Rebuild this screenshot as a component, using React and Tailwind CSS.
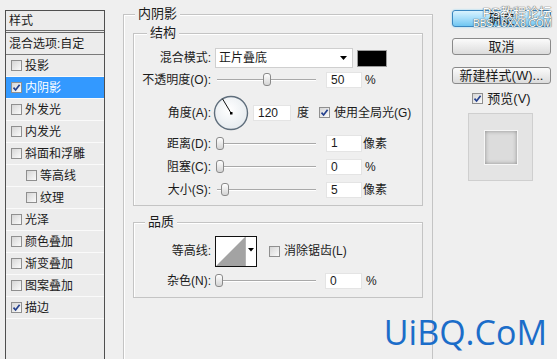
import React from 'react';

const styleItems = [
  { label: '投影', checked: false },
  { label: '内阴影', checked: true, selected: true },
  { label: '外发光', checked: false },
  { label: '内发光', checked: false },
  { label: '斜面和浮雕', checked: false },
  { label: '等高线', checked: false, indent: true },
  { label: '纹理', checked: false, indent: true },
  { label: '光泽', checked: false },
  { label: '颜色叠加', checked: false },
  { label: '渐变叠加', checked: false },
  { label: '图案叠加', checked: false },
  { label: '描边', checked: true },
];

function Check({ checked }) {
  return (
    <span className="inline-flex h-[11px] w-[11px] shrink-0 items-center justify-center border border-[#8f8f8f] bg-linear-to-br from-[#d6d6d6] to-[#fbfbfb]">
      {checked && (
        <svg width="9" height="9" viewBox="0 0 9 9">
          <path d="M1.5 4.6 L3.6 7 L7.6 1.8" fill="none" stroke="#24408e" strokeWidth="1.7" />
        </svg>
      )}
    </span>
  );
}

function Legend({ children, className }) {
  return (
    <span className={`absolute top-[-9px] bg-[#efefef] px-[3px] text-[13px] leading-[16px] ${className}`}>
      {children}
    </span>
  );
}

function Row({ label, className, children }) {
  return (
    <div className={`flex items-center ${className}`}>
      <span className="w-[77px] shrink-0 text-right text-[12px] leading-[16px]">{label}</span>
      <div className="ml-[4px] flex items-center">{children}</div>
    </div>
  );
}

function Slider({ pos }) {
  return (
    <div className="relative h-[16px] w-[103px]">
      <div className="absolute left-[2px] right-[2px] top-[7px] h-[2px] border-t border-b border-t-[#a9a9a9] border-b-white" />
      <div
        className="absolute top-[1px] h-[13px] w-[8px] rounded-[3px] border border-[#8a8a8a] bg-linear-to-b from-white to-[#d4d4d4]"
        style={{ left: pos }}
      />
    </div>
  );
}

function Field({ value, className = 'ml-[8px]' }) {
  return (
    <div className={`h-[16px] w-[36px] border border-[#e4e4e4] bg-white pl-[4px] text-[12px] leading-[15px] ${className}`}>
      {value}
    </div>
  );
}

function Button({ children, primary, className = '' }) {
  return (
    <div
      className={`flex h-[17px] w-[99px] items-center justify-center rounded-[3px] border text-[13px] leading-[16px] ${
        primary
          ? 'border-[#3a86bf] bg-linear-to-b from-[#d9f3fe] via-[#a6defa] to-[#6fc6f1] shadow-[0_0_2px_#7fd0f5]'
          : 'border-[#8a8a8a] bg-linear-to-b from-[#fbfbfb] to-[#dcdcdc]'
      } ${className}`}
    >
      {children}
    </div>
  );
}

export default function App() {
  return (
    <div className="relative flex h-[359px] w-[557px] items-start overflow-hidden bg-[#efefef] text-[#1b1b1b] [font-family:'Liberation_Sans','Noto_Sans_CJK_SC',sans-serif]">
      {/* style list */}
      <div className="ml-[5px] mt-[10px] h-[360px] w-[100px] shrink-0 border border-[#4f4f4f] bg-[#ececec] text-[12px] leading-[16px]">
        <div className="flex h-[22px] items-center border-b-[3px] border-double border-[#6a6a6a] pl-[3px]">样式</div>
        <div className="flex h-[22px] items-center border-b border-[#7a7a7a] pl-[3px]">混合选项:自定</div>
        {styleItems.map((item) => (
          <div
            key={item.label}
            className={`flex h-[22px] items-center gap-[3px] border-b border-[#fafafa] ${item.indent ? 'pl-[20px]' : 'pl-[5px]'} ${item.selected ? 'bg-[#3399ff] text-white' : ''}`}
          >
            <Check checked={item.checked} />
            <span>{item.label}</span>
          </div>
        ))}
      </div>

      {/* inner shadow settings */}
      <div className="relative ml-[18px] mt-[14px] h-[360px] w-[310px] shrink-0 border border-[#c4c4c4] shadow-[inset_1px_1px_0_#fff]">
        <Legend className="left-[11px]">内阴影</Legend>

        <div className="relative ml-[9px] mt-[18px] h-[173px] w-[290px] border border-[#c4c4c4] shadow-[inset_1px_1px_0_#fff]">
          <Legend className="left-[13px]">结构</Legend>
          <div className="flex flex-col pt-[14px]">
            <Row label="混合模式:" className="h-[20px]">
              <div className="flex h-[20px] w-[138px] items-center justify-between border border-[#cfcfcf] bg-white pl-[3px] pr-[5px] text-[12px] leading-[16px]">
                <span>正片叠底</span>
                <svg width="7" height="4" viewBox="0 0 7 4">
                  <path d="M0 0 H7 L3.5 4 Z" fill="#000" />
                </svg>
              </div>
              <div className="ml-[4px] h-[17px] w-[30px] border border-[#9a9a9a] bg-black" />
            </Row>
            <Row label="不透明度(O):" className="mt-[4px] h-[16px]">
              <Slider pos={48} />
              <Field value="50" />
              <span className="ml-[3px] text-[12px]">%</span>
            </Row>
            <Row label="角度(A):" className="mt-[7px] h-[35px]">
              <svg width="36" height="36" viewBox="0 0 36 36" className="-ml-[2px]">
                <defs>
                  <radialGradient id="dial" cx="0.45" cy="0.4" r="0.6">
                    <stop offset="0" stopColor="#ffffff" />
                    <stop offset="1" stopColor="#e6ebef" />
                  </radialGradient>
                </defs>
                <circle cx="18" cy="18" r="16.5" fill="url(#dial)" stroke="#5f6e7c" strokeWidth="1.4" />
                <line x1="18" y1="18" x2="9.5" y2="3.8" stroke="#111" strokeWidth="1" />
                <rect x="17" y="17" width="2.5" height="2.5" fill="#000" />
              </svg>
              <Field value="120" className="ml-[4px] w-[38px]" />
              <span className="ml-[6px] text-[12px]">度</span>
              <span className="ml-[10px] flex items-center gap-[4px] text-[12px]">
                <Check checked />
                使用全局光(G)
              </span>
            </Row>
            <Row label="距离(D):" className="mt-[5px] h-[17px]">
              <Slider pos={1} />
              <Field value="1" className="ml-[8px] h-[17px]" />
              <span className="ml-[1px] text-[12px]">像素</span>
            </Row>
            <Row label="阻塞(C):" className="mt-[7px] h-[16px]">
              <Slider pos={1} />
              <Field value="0" />
              <span className="ml-[3px] text-[12px]">%</span>
            </Row>
            <Row label="大小(S):" className="mt-[7px] h-[16px]">
              <Slider pos={6} />
              <Field value="5" />
              <span className="ml-[1px] text-[12px]">像素</span>
            </Row>
          </div>
        </div>

        <div className="relative ml-[9px] mt-[16px] h-[76px] w-[290px] border border-[#c4c4c4] shadow-[inset_1px_1px_0_#fff]">
          <Legend className="left-[11px]">品质</Legend>
          <div className="flex flex-col pt-[13px]">
            <Row label="等高线:" className="h-[30px]">
              <svg width="42" height="31" viewBox="0 0 42 31">
                <rect x="0.5" y="0.5" width="41" height="30" fill="#fff" stroke="#111" />
                <path d="M1 30 L30 1 V30 Z" fill="#a3a3a3" />
                <line x1="30.5" y1="1" x2="30.5" y2="30" stroke="#b5b5b5" />
                <path d="M33 12 H39 L36 15.5 Z" fill="#000" />
              </svg>
              <span className="ml-[12px] flex items-center gap-[4px] text-[12px]">
                <Check checked={false} />
                消除锯齿(L)
              </span>
            </Row>
            <Row label="杂色(N):" className="mt-[7px] h-[16px]">
              <Slider pos={0} />
              <Field value="0" className="ml-[7px] w-[37px]" />
              <span className="ml-[4px] text-[12px]">%</span>
            </Row>
          </div>
        </div>
      </div>

      {/* buttons and preview */}
      <div className="ml-[19px] mt-[10px] flex w-[99px] shrink-0 flex-col">
        <div className="relative">
          <Button primary>确定</Button>
          <div className="absolute left-[21px] top-[-4px] flex flex-col items-end text-white [text-shadow:0_0_1px_#4a4a4a,0_0_1px_#4a4a4a]">
            <span className="text-[13px] leading-[13px]">PS教程论坛</span>
            <span className="text-[10px] leading-[10px]">BBS.16XX8.COM</span>
          </div>
        </div>
        <Button className="mt-[11px]">取消</Button>
        <Button className="mt-[12px]">新建样式(W)...</Button>
        <div className="mt-[8px] flex h-[13px] items-center justify-center gap-[4px] text-[13px] leading-[16px]">
          <Check checked />
          预览(V)
        </div>
        <div className="ml-[16px] mt-[8px] flex h-[68px] w-[65px] items-center justify-center border border-[#cfcfcf] bg-[#e4e4e4]">
          <div className="h-[35px] w-[34px] border border-[#f6f6f6] bg-[#dcdcdc] shadow-[inset_0_0_4px_#8c8c8c]" />
        </div>
      </div>

      {/* site watermark */}
      <span className="absolute bottom-[5px] right-[10px] text-[34px] leading-[44px] text-[#1b6dc9] [font-family:'Open_Sans',sans-serif]">
        UiBQ.CoM
      </span>
    </div>
  );
}
